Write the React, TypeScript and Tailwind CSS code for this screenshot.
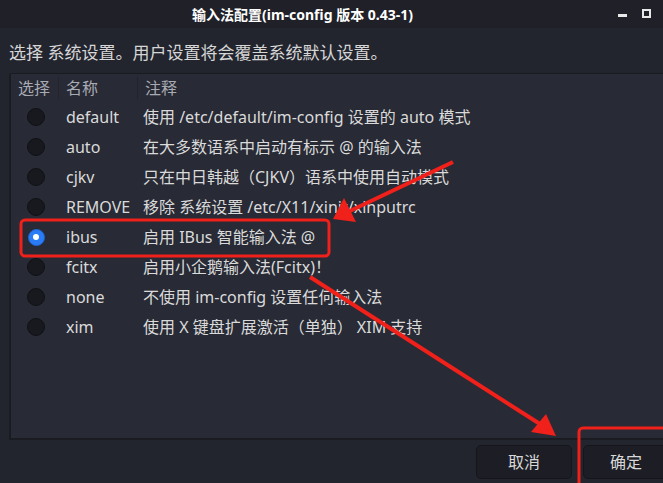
import React from 'react';

const rows = [
  { name: 'default', desc: '使用 /etc/default/im-config 设置的 auto 模式' },
  { name: 'auto', desc: '在大多数语系中启动有标示 @ 的输入法' },
  { name: 'cjkv', desc: '只在中日韩越（CJKV）语系中使用自动模式' },
  { name: 'REMOVE', desc: '移除 系统设置 /etc/X11/xinit/xinputrc' },
  { name: 'ibus', desc: '启用 IBus 智能输入法 @', checked: true },
  { name: 'fcitx', desc: '启用小企鹅输入法(Fcitx)！' },
  { name: 'none', desc: '不使用 im-config 设置任何输入法' },
  { name: 'xim', desc: '使用 X 键盘扩展激活（单独） XIM 支持' },
];

const Radio = ({ checked }: { checked?: boolean }) =>
  checked ? (
    <span className="w-[17px] h-[17px] rounded-full bg-[#2a7cf6] border border-[#1f63d0] flex items-center justify-center">
      <span className="w-[6px] h-[6px] rounded-full bg-white" />
    </span>
  ) : (
    <span className="w-[18px] h-[18px] rounded-full bg-[#18191e] border border-[#101115]" />
  );

export default function App() {
  return (
    <div
      className="relative w-[663px] h-[483px] overflow-hidden bg-[#23252e] text-[#dcdcdc] flex flex-col"
      style={{ fontFamily: '"Noto Sans", "Noto Sans CJK SC", sans-serif' }}
    >
      {/* Title bar */}
      <div className="h-[28px] shrink-0 bg-[#1f2028] flex items-center relative">
        <div className="flex-1 text-center text-[14px] font-bold text-white mr-[58px]">
          输入法配置(im-config 版本 0.43-1)
        </div>
        <div className="absolute right-[12px] top-[9px] flex items-end gap-[15px]">
          <span className="w-[9px] h-[3px] bg-[#e8e8e8] mb-[1px]" />
          <span className="w-[9px] h-[9px] border-[2px] border-[#e8e8e8] flex items-center justify-center">
            <span className="w-[3px] h-[3px] bg-[#1f2028]" />
          </span>
        </div>
      </div>

      {/* Label */}
      <div className="pl-[9px] pt-[12px] h-[45px] shrink-0 text-[17px] text-[#d6d6d6]">
        选择 系统设置。用户设置将会覆盖系统默认设置。
      </div>

      {/* List */}
      <div className="ml-[10px] mr-[-10px] h-[366px] shrink-0 bg-[#282a35] border border-[#1a1b21] shadow-[-1px_1px_0_#1b1c22] flex flex-col">
        <div className="h-[27px] flex items-center text-[16px] text-[#a9abb4]">
          <div className="w-[48px] pl-[7px] border-r border-[#22232b] h-[22px] flex items-center">选择</div>
          <div className="w-[79px] pl-[7px] border-r border-[#22232b] h-[22px] flex items-center">名称</div>
          <div className="pl-[7px]">注释</div>
        </div>
        <div className="pt-[1px]">
          {rows.map((r) => (
            <div key={r.name} className="h-[30px] flex items-center text-[16px]">
              <div className="w-[48px] flex justify-center pl-[2px]">
                <Radio checked={r.checked} />
              </div>
              <div className="w-[80px] pl-[7px] text-[#dadada]">{r.name}</div>
              <div className="pl-[4px] text-[#dadada] whitespace-nowrap">{r.desc}</div>
            </div>
          ))}
        </div>
      </div>

      {/* Buttons */}
      <div className="flex-1 flex items-center justify-end gap-[11px] mr-[-20px] pt-[2px]">
        <button className="w-[96px] h-[34px] rounded-[5px] bg-[#1d1e25] border border-[#15161b] text-[16px] text-[#d8d8d8]">
          取消
        </button>
        <button className="w-[100px] h-[34px] rounded-[5px] bg-[#1d1e25] border border-[#15161b] text-[16px] text-[#d8d8d8] text-left pl-[26px]">
          确定
        </button>
      </div>

      {/* Red annotations */}
      <svg className="absolute inset-0 pointer-events-none" width="663" height="483" viewBox="0 0 663 483">
        <rect x="21" y="220" width="308" height="36" rx="4" fill="none" stroke="#f0201a" strokeWidth="3" />
        <rect x="579" y="428" width="100" height="70" rx="4" fill="none" stroke="#f0201a" strokeWidth="3" />
        {/* arrow to ibus */}
        <line x1="453" y1="162" x2="350" y2="211" stroke="#f0201a" strokeWidth="4" />
        <polygon points="333,219 344,198 356,222" fill="#f0201a" />
        {/* arrow to confirm */}
        <line x1="310" y1="277" x2="540" y2="424" stroke="#f0201a" strokeWidth="4" />
        <polygon points="556,436 531,432 546,414" fill="#f0201a" />
      </svg>
    </div>
  );
}
